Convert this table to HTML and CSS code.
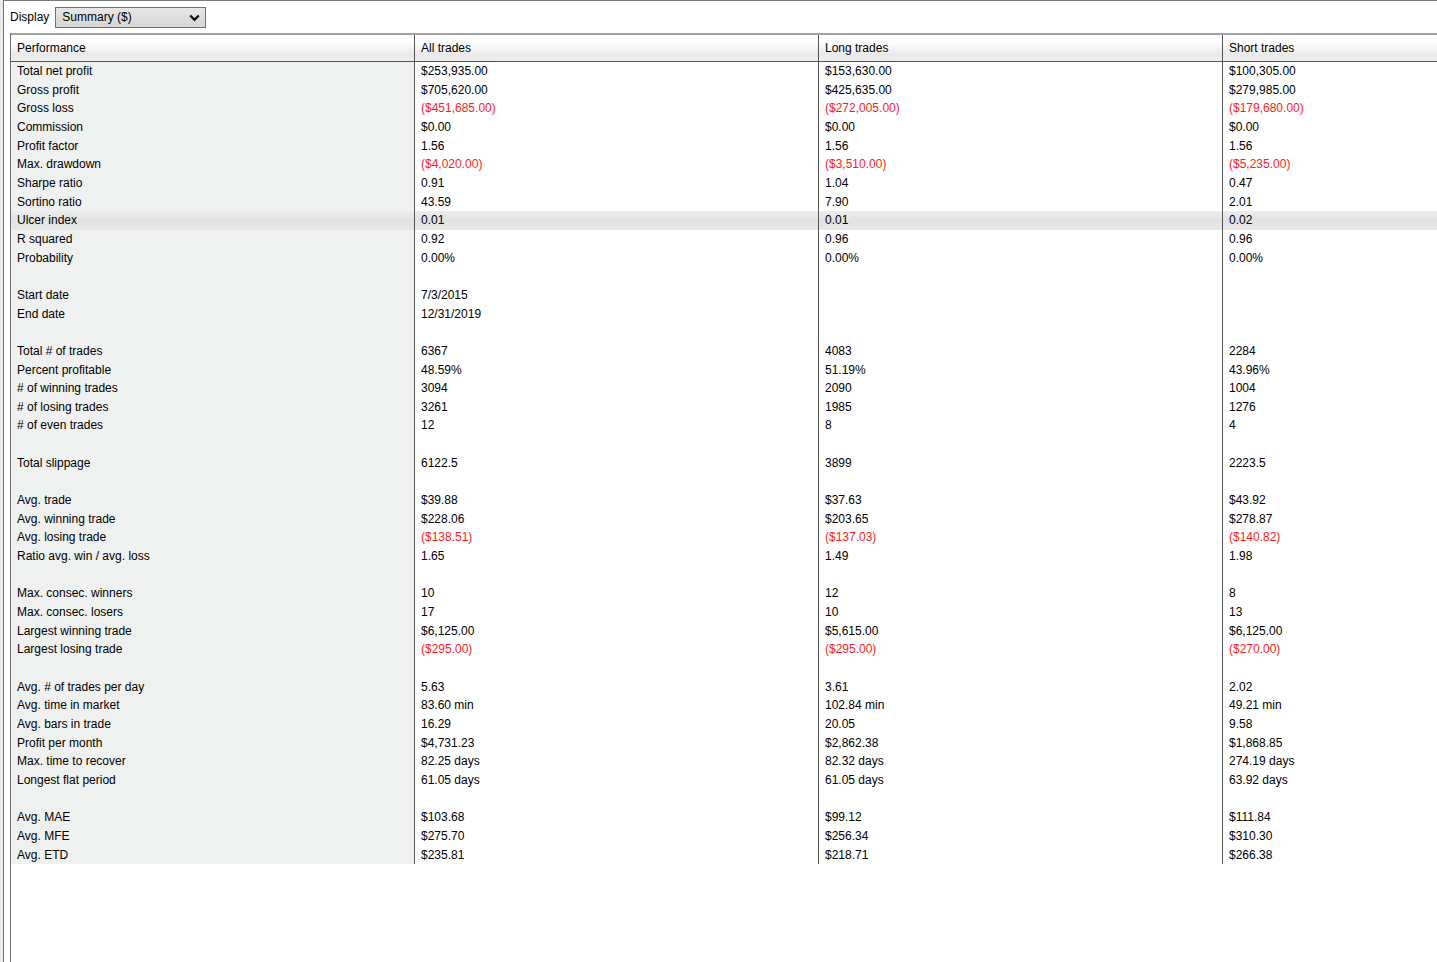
FILE: index.html
```html
<!DOCTYPE html>
<html>
<head>
<meta charset="utf-8">
<link rel="stylesheet" href="styles.css">
</head>
<body>
<div class="frame">
  <div class="toolbar">
    <span class="label">Display</span>
    <div class="select">
      <span>Summary ($)</span>
      <svg class="chev" width="11" height="8" viewBox="0 0 11 8"><polyline points="1.2,1.5 5.5,5.8 9.8,1.5" fill="none" stroke="#111" stroke-width="2.3"/></svg>
    </div>
  </div>
  <div class="panel">
    <div class="grid">
      <div class="row head"><div class="c first">Performance</div><div class="c">All trades</div><div class="c">Long trades</div><div class="c">Short trades</div></div>
      <div class="row"><div class="c first">Total net profit</div><div class="c">$253,935.00</div><div class="c">$153,630.00</div><div class="c">$100,305.00</div></div>
      <div class="row"><div class="c first">Gross profit</div><div class="c">$705,620.00</div><div class="c">$425,635.00</div><div class="c">$279,985.00</div></div>
      <div class="row"><div class="c first">Gross loss</div><div class="c neg">($451,685.00)</div><div class="c neg">($272,005.00)</div><div class="c neg">($179,680.00)</div></div>
      <div class="row"><div class="c first">Commission</div><div class="c">$0.00</div><div class="c">$0.00</div><div class="c">$0.00</div></div>
      <div class="row"><div class="c first">Profit factor</div><div class="c">1.56</div><div class="c">1.56</div><div class="c">1.56</div></div>
      <div class="row"><div class="c first">Max. drawdown</div><div class="c neg">($4,020.00)</div><div class="c neg">($3,510.00)</div><div class="c neg">($5,235.00)</div></div>
      <div class="row"><div class="c first">Sharpe ratio</div><div class="c">0.91</div><div class="c">1.04</div><div class="c">0.47</div></div>
      <div class="row"><div class="c first">Sortino ratio</div><div class="c">43.59</div><div class="c">7.90</div><div class="c">2.01</div></div>
      <div class="row sel"><div class="c first">Ulcer index</div><div class="c">0.01</div><div class="c">0.01</div><div class="c">0.02</div></div>
      <div class="row"><div class="c first">R squared</div><div class="c">0.92</div><div class="c">0.96</div><div class="c">0.96</div></div>
      <div class="row"><div class="c first">Probability</div><div class="c">0.00%</div><div class="c">0.00%</div><div class="c">0.00%</div></div>
      <div class="row"><div class="c first"></div><div class="c"></div><div class="c"></div><div class="c"></div></div>
      <div class="row"><div class="c first">Start date</div><div class="c">7/3/2015</div><div class="c"></div><div class="c"></div></div>
      <div class="row"><div class="c first">End date</div><div class="c">12/31/2019</div><div class="c"></div><div class="c"></div></div>
      <div class="row"><div class="c first"></div><div class="c"></div><div class="c"></div><div class="c"></div></div>
      <div class="row"><div class="c first">Total # of trades</div><div class="c">6367</div><div class="c">4083</div><div class="c">2284</div></div>
      <div class="row"><div class="c first">Percent profitable</div><div class="c">48.59%</div><div class="c">51.19%</div><div class="c">43.96%</div></div>
      <div class="row"><div class="c first"># of winning trades</div><div class="c">3094</div><div class="c">2090</div><div class="c">1004</div></div>
      <div class="row"><div class="c first"># of losing trades</div><div class="c">3261</div><div class="c">1985</div><div class="c">1276</div></div>
      <div class="row"><div class="c first"># of even trades</div><div class="c">12</div><div class="c">8</div><div class="c">4</div></div>
      <div class="row"><div class="c first"></div><div class="c"></div><div class="c"></div><div class="c"></div></div>
      <div class="row"><div class="c first">Total slippage</div><div class="c">6122.5</div><div class="c">3899</div><div class="c">2223.5</div></div>
      <div class="row"><div class="c first"></div><div class="c"></div><div class="c"></div><div class="c"></div></div>
      <div class="row"><div class="c first">Avg. trade</div><div class="c">$39.88</div><div class="c">$37.63</div><div class="c">$43.92</div></div>
      <div class="row"><div class="c first">Avg. winning trade</div><div class="c">$228.06</div><div class="c">$203.65</div><div class="c">$278.87</div></div>
      <div class="row"><div class="c first">Avg. losing trade</div><div class="c neg">($138.51)</div><div class="c neg">($137.03)</div><div class="c neg">($140.82)</div></div>
      <div class="row"><div class="c first">Ratio avg. win / avg. loss</div><div class="c">1.65</div><div class="c">1.49</div><div class="c">1.98</div></div>
      <div class="row"><div class="c first"></div><div class="c"></div><div class="c"></div><div class="c"></div></div>
      <div class="row"><div class="c first">Max. consec. winners</div><div class="c">10</div><div class="c">12</div><div class="c">8</div></div>
      <div class="row"><div class="c first">Max. consec. losers</div><div class="c">17</div><div class="c">10</div><div class="c">13</div></div>
      <div class="row"><div class="c first">Largest winning trade</div><div class="c">$6,125.00</div><div class="c">$5,615.00</div><div class="c">$6,125.00</div></div>
      <div class="row"><div class="c first">Largest losing trade</div><div class="c neg">($295.00)</div><div class="c neg">($295.00)</div><div class="c neg">($270.00)</div></div>
      <div class="row"><div class="c first"></div><div class="c"></div><div class="c"></div><div class="c"></div></div>
      <div class="row"><div class="c first">Avg. # of trades per day</div><div class="c">5.63</div><div class="c">3.61</div><div class="c">2.02</div></div>
      <div class="row"><div class="c first">Avg. time in market</div><div class="c">83.60 min</div><div class="c">102.84 min</div><div class="c">49.21 min</div></div>
      <div class="row"><div class="c first">Avg. bars in trade</div><div class="c">16.29</div><div class="c">20.05</div><div class="c">9.58</div></div>
      <div class="row"><div class="c first">Profit per month</div><div class="c">$4,731.23</div><div class="c">$2,862.38</div><div class="c">$1,868.85</div></div>
      <div class="row"><div class="c first">Max. time to recover</div><div class="c">82.25 days</div><div class="c">82.32 days</div><div class="c">274.19 days</div></div>
      <div class="row"><div class="c first">Longest flat period</div><div class="c">61.05 days</div><div class="c">61.05 days</div><div class="c">63.92 days</div></div>
      <div class="row"><div class="c first"></div><div class="c"></div><div class="c"></div><div class="c"></div></div>
      <div class="row"><div class="c first">Avg. MAE</div><div class="c">$103.68</div><div class="c">$99.12</div><div class="c">$111.84</div></div>
      <div class="row"><div class="c first">Avg. MFE</div><div class="c">$275.70</div><div class="c">$256.34</div><div class="c">$310.30</div></div>
      <div class="row"><div class="c first">Avg. ETD</div><div class="c">$235.81</div><div class="c">$218.71</div><div class="c">$266.38</div></div>
    </div>
  </div>
</div>
</body>
</html>
```

FILE: styles.css
```css
html, body {
  margin: 0;
  padding: 0;
  height: 100%;
  overflow: hidden;
}
body {
  background: #e9eaea;
  font-family: "Liberation Sans", Arial, sans-serif;
  font-size: 12px;
  color: #000;
  padding-left: 3px;
  box-sizing: border-box;
}
.frame {
  height: 962px;
  background: #fff;
  border-left: 1px solid #6b6b6b;
  border-top: 1px solid #7a7a7a;
  box-sizing: border-box;
  padding-left: 6px;
  display: flex;
  flex-direction: column;
}
.toolbar {
  height: 32px;
  display: flex;
  align-items: flex-start;
  padding-top: 6px;
  box-sizing: border-box;
}
.label {
  line-height: 21px;
  margin-right: 6px;
}
.select {
  width: 151px;
  height: 21px;
  box-sizing: border-box;
  border: 1px solid #707070;
  background: linear-gradient(#e6e6e6, #d6d6d6);
  display: flex;
  align-items: center;
  justify-content: space-between;
  padding: 0 5px 0 6px;
  line-height: 19px;
}
.chev {
  display: block;
}
.panel {
  flex: 1;
  border-left: 1px solid #6e6e6e;
  overflow: hidden;
}
.grid {
  width: 1700px;
}
.row {
  display: grid;
  grid-template-columns: 403px 404px 404px 404px;
  height: 18.667px;
  line-height: 18.667px;
}
.c {
  padding-left: 6px;
  white-space: nowrap;
  overflow: hidden;
  border-left: 1px solid #555;
}
.c.first {
  border-left: none;
  background: #eff0f0;
}
.row.head {
  height: 26px;
  line-height: 26px;
  border-top: 2px solid #a3a3a3;
  border-bottom: 1px solid #555;
  background: linear-gradient(#ffffff 0%, #fcfcfc 35%, #e9e9e9 75%, #eeeeee 100%);
}
.row.head .c.first {
  background: transparent;
}
.row.sel,
.row.sel .c.first {
  background: linear-gradient(#ececec, #e2e2e2 50%, #e8e8e8);
}
.neg {
  color: #ff1a1a;
}
```
